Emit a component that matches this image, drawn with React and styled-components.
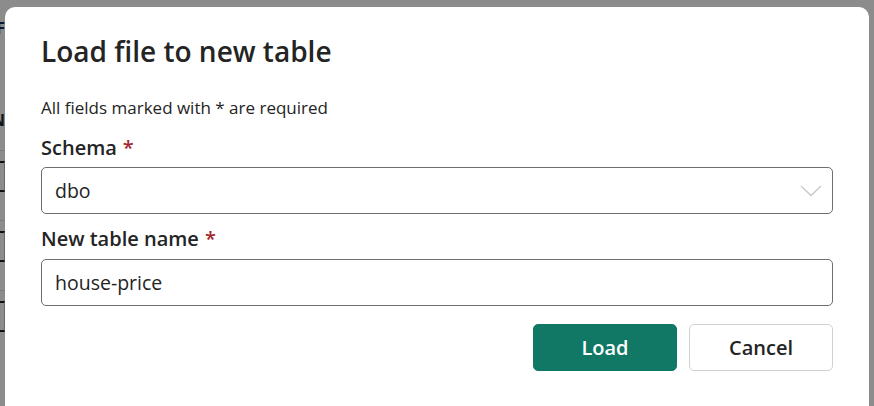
import React from 'react'
import styled, { createGlobalStyle } from 'styled-components'

const GlobalStyle = createGlobalStyle`
  html, body {
    margin: 0;
    padding: 0;
    background: #ffffff;
    font-family: "Open Sans", "Noto Sans", sans-serif;
    color: #242424;
  }
  * { box-sizing: border-box; }
`

const Page = styled.div`
  position: relative;
  width: 874px;
  height: 406px;
  overflow: hidden;
  background: #ffffff;
`

const BackList = styled.div`
  display: flex;
  flex-direction: column;
  margin-left: -40px;
  width: 45px;
  padding-top: 18px;
`

const BackHeading = styled.div`
  height: ${p => p.$h}px;
  font-size: 16px;
  font-weight: 700;
  color: ${p => p.$color || '#242424'};
  text-align: right;
  line-height: 20px;
`

const BackRow = styled.div`
  height: 70px;
  padding-top: 10px;
  border-top: 1px solid #e0e0e0;
`

const BackField = styled.div`
  height: 31px;
  border: 2px solid #202020;
  border-left: none;
  border-right: 1px solid #bdbdbd;
`

const Backdrop = styled.div`
  position: absolute;
  inset: 0;
  background: rgba(0, 0, 0, 0.45);
  padding: 7px 5px 0 5px;
`

const Dialog = styled.div`
  width: 864px;
  height: 420px;
  background: #ffffff;
  border-radius: 10px;
  padding: 24px 36px 0 36px;
  display: flex;
  flex-direction: column;
`

const Title = styled.h2`
  margin: 0;
  font-size: 28px;
  line-height: 40px;
  font-weight: 600;
  color: #242424;
`

const Hint = styled.p`
  margin: 26px 0 0 0;
  font-size: 17px;
  line-height: 22px;
  color: #242424;
`

const Label = styled.label`
  display: block;
  margin-top: ${p => p.$top}px;
  font-size: 20px;
  line-height: 26px;
  font-weight: 600;
  color: #242424;
`

const Required = styled.span`
  color: #a4262c;
  margin-left: 6px;
`

const FieldBox = styled.div`
  margin-top: ${p => p.$top}px;
  height: 47px;
  border: 1px solid #6e6e6e;
  border-radius: 5px;
  display: flex;
  align-items: center;
  justify-content: space-between;
  padding: 0 10px 0 13px;
  font-size: 19.5px;
  color: #242424;
`

const Chevron = () => (
  <svg width="22" height="12" viewBox="0 0 22 12" fill="none">
    <path d="M1 1 L11 10.5 L21 1" stroke="#c8c8c8" strokeWidth="1.3" />
  </svg>
)

const Actions = styled.div`
  margin-top: 18px;
  display: flex;
  justify-content: flex-end;
  gap: 12px;
`

const Button = styled.button`
  width: 144px;
  height: 47px;
  border-radius: 5px;
  font-family: inherit;
  font-size: 20px;
  font-weight: 600;
  cursor: pointer;
  border: 1px solid ${p => (p.$primary ? '#117865' : '#d1d1d1')};
  background: ${p => (p.$primary ? '#117865' : '#ffffff')};
  color: ${p => (p.$primary ? '#ffffff' : '#242424')};
`

export default function App() {
  return (
    <>
      <GlobalStyle />
      <Page>
        <BackList>
          <BackHeading $h={92} $color="#1b2a5c">F</BackHeading>
          <BackHeading $h={40}>N</BackHeading>
          {[0, 1, 2].map(i => (
            <BackRow key={i}>
              <BackField />
            </BackRow>
          ))}
        </BackList>
        <Backdrop>
          <Dialog role="dialog">
            <Title>Load file to new table</Title>
            <Hint>All fields marked with * are required</Hint>
            <Label $top={16}>
              Schema<Required>*</Required>
            </Label>
            <FieldBox $top={6}>
              <span>dbo</span>
              <Chevron />
            </FieldBox>
            <Label $top={12}>
              New table name<Required>*</Required>
            </Label>
            <FieldBox $top={7}>
              <span>house-price</span>
            </FieldBox>
            <Actions>
              <Button $primary>Load</Button>
              <Button>Cancel</Button>
            </Actions>
          </Dialog>
        </Backdrop>
      </Page>
    </>
  )
}
